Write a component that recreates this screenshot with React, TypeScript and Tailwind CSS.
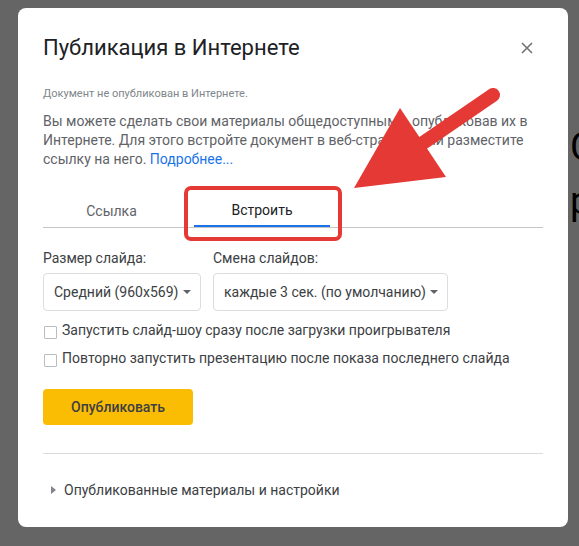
import React from 'react';

const font = { fontFamily: 'Roboto, "Noto Sans", Arial, sans-serif' };

const Caret = () => (
  <svg width="8" height="4" viewBox="0 0 8 4" className="shrink-0">
    <path d="M0 0 L8 0 L4 4 Z" fill="#5f6368" />
  </svg>
);

const Select = ({ value, width }: { value: string; width: string }) => (
  <div className={`${width} h-[38px] flex items-center justify-between pl-[10px] pr-[9px] border border-[#dadce0] rounded-[4px] text-[14px] text-[#3c4043]`}>
    <span>{value}</span>
    <Caret />
  </div>
);

const CheckRow = ({ label }: { label: string }) => (
  <label className="flex items-center gap-[5px] h-[20px] text-[14px] text-[#3c4043]">
    <span className="w-[13px] h-[13px] mt-[4px] border border-[#b9bcc0] rounded-[1px] bg-white shrink-0" />
    <span>{label}</span>
  </label>
);

export default function App() {
  return (
    <div className="relative w-[579px] h-[546px] overflow-hidden bg-[#656565]" style={font}>
      {/* page content peeking behind the overlay */}
      <div className="absolute left-[570px] top-[128px] text-[38px] leading-none text-black">Со</div>
      <div className="absolute left-[570px] top-[182px] text-[38px] leading-none text-black">ро</div>

      <div className="pt-[8px] pl-[18px]">
        <div className="relative z-10 w-[550px] h-[519px] bg-white rounded-[8px] px-[25px] pt-[24px]">
          <div className="flex items-center justify-between h-[32px]">
            <h2 className="text-[22px] text-[#202124] leading-[28px]">Публикация в Интернете</h2>
            <button className="w-8 h-8 flex items-center justify-center">
              <svg width="12" height="12" viewBox="0 0 12 12">
                <path d="M1 1 L11 11 M11 1 L1 11" stroke="#6f7377" strokeWidth="1.6" />
              </svg>
            </button>
          </div>

          <p className="mt-[22px] text-[11px] leading-[16px] text-[#80868b]">Документ не опубликован в Интернете.</p>

          <p className="mt-[10px] text-[14px] leading-[19px] text-[#5f6368]">
            Вы можете сделать свои материалы общедоступными, опубликовав их в Интернете. Для этого встройте
            документ в веб-страницу или разместите ссылку на него.{' '}
            <a className="text-[#1a73e8]">Подробнее...</a>
          </p>

          <div className="mt-[26px] flex gap-[14px] border-b border-[#c6c6c6]">
            <div className="w-[137px] h-[32px] flex items-center justify-center text-[14px] text-[#5f6368]">Ссылка</div>
            <div className="w-[136px] h-[32px] flex items-center justify-center text-[14px] text-[#202124] border-b-2 border-[#1a73e8] -mb-px">
              Встроить
            </div>
          </div>

          <div className="mt-[20px] flex gap-[12px]">
            <div>
              <div className="text-[14px] leading-[20px] text-[#3c4043]">Размер слайда:</div>
              <div className="mt-[5px]">
                <Select value="Средний (960x569)" width="w-[158px]" />
              </div>
            </div>
            <div>
              <div className="text-[14px] leading-[20px] text-[#3c4043]">Смена слайдов:</div>
              <div className="mt-[5px]">
                <Select value="каждые 3 сек. (по умолчанию)" width="w-[235px]" />
              </div>
            </div>
          </div>

          <div className="mt-[9px] flex flex-col gap-[8px] pl-px">
            <CheckRow label="Запустить слайд-шоу сразу после загрузки проигрывателя" />
            <CheckRow label="Повторно запустить презентацию после показа последнего слайда" />
          </div>

          <button className="mt-[21px] w-[150px] h-[36px] rounded-[4px] bg-[#fbbc04] text-[14px] font-medium text-[#3c4043]">
            Опубликовать
          </button>

          <div className="mt-[28px] border-t border-[#dadce0]" />

          <div className="mt-[26px] flex items-center gap-[8px] h-[20px] text-[14px] text-[#3c4043] pl-[8px]">
            <svg width="5" height="8" viewBox="0 0 5 8">
              <path d="M0 0 L5 4 L0 8 Z" fill="#80868b" />
            </svg>
            <span>Опубликованные материалы и настройки</span>
          </div>
        </div>
      </div>

      {/* annotation */}
      <div className="absolute z-20 left-[184px] top-[186px] w-[158px] h-[55px] border-[4px] border-[#e53935] rounded-[7px]" />
      <svg className="absolute z-20 left-0 top-0" width="579" height="546">
        <line x1="493" y1="95" x2="420" y2="145" stroke="#e53935" strokeWidth="14" strokeLinecap="round" />
        <path d="M354 188 L400 108 L446 177 Z" fill="#e53935" />
      </svg>
    </div>
  );
}
